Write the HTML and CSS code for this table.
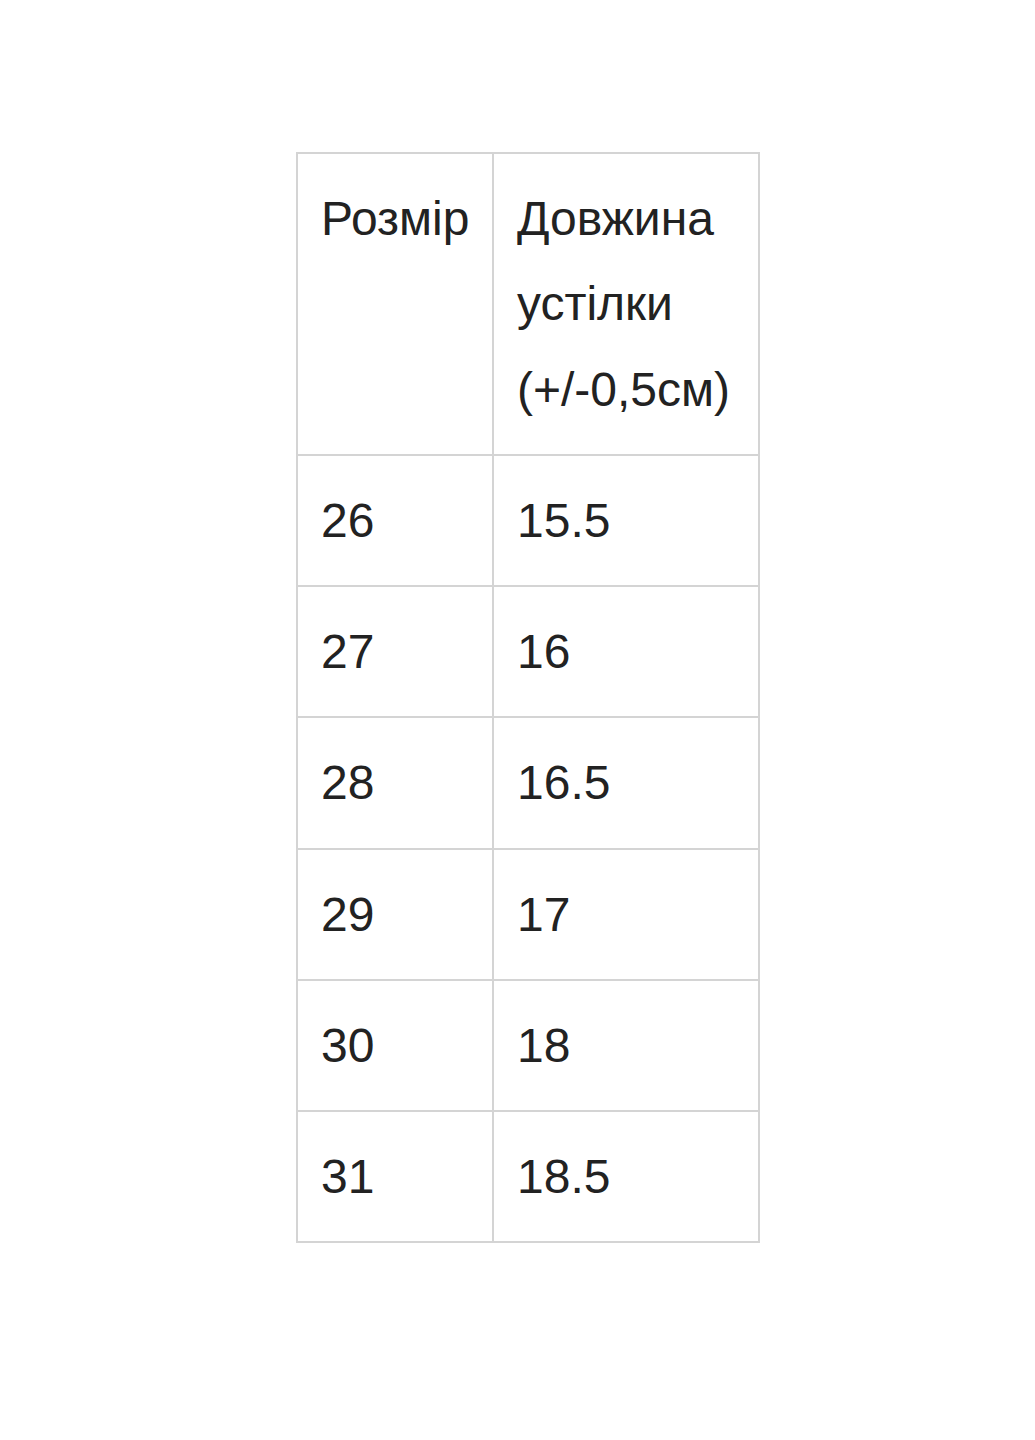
FILE: index.html
```html
<!DOCTYPE html>
<html lang="uk">
<head>
<meta charset="utf-8">
<title>Розмірна сітка</title>
<link rel="stylesheet" href="styles.css">
</head>
<body>
<main class="page">
  <table class="sizes">
    <colgroup>
      <col class="col-size">
      <col class="col-len">
    </colgroup>
    <tbody>
      <tr><td>Розмір</td><td>Довжина устілки (+/-0,5см)</td></tr>
      <tr><td>26</td><td>15.5</td></tr>
      <tr><td>27</td><td>16</td></tr>
      <tr><td>28</td><td>16.5</td></tr>
      <tr><td>29</td><td>17</td></tr>
      <tr><td>30</td><td>18</td></tr>
      <tr><td>31</td><td>18.5</td></tr>
    </tbody>
  </table>
</main>
</body>
</html>
```
FILE: styles.css
```css
html, body {
  margin: 0;
  padding: 0;
  background: #ffffff;
}
.page {
  padding: 152px 0 0 296px;
}
.sizes {
  border-collapse: collapse;
  table-layout: fixed;
  width: 462px;
  font-family: "Liberation Sans", Arial, sans-serif;
  font-size: 48px;
  line-height: 85.25px;
  color: #222222;
}
.col-size { width: 196px; }
.col-len { width: 266px; }
.sizes td {
  border: 2px solid #d4d4d4;
  padding: 22px 18px 22px 23px;
  vertical-align: top;
  text-align: left;
}
```
